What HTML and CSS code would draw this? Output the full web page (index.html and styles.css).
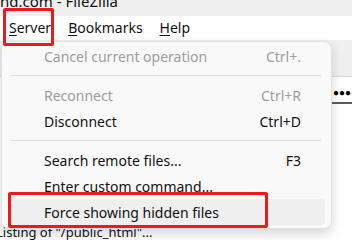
FILE: index.html
```html
<!DOCTYPE html>
<html lang="en">
<head>
    <meta charset="UTF-8">
    <meta name="viewport" content="width=device-width, initial-scale=1.0">
    <title>FileZilla - Server menu</title>
    <link rel="stylesheet" href="styles.css">
</head>
<body>
    <div class="window">
        <div class="titlebar"><span class="title">nd.com - FileZilla</span></div>
        <div class="menubar">
            <span class="menu-item"><u>S</u>erver</span>
            <span class="menu-item"><u>B</u>ookmarks</span>
            <span class="menu-item"><u>H</u>elp</span>
        </div>
        <div class="toolbar"></div>
        <div class="quickbar">
            <div class="field">&#9679;&#9679;&#9679;&#9679;</div>
        </div>
        <div class="content"></div>
        <div class="log">Listing of "/public_html"...</div>

        <div class="popup">
            <div class="item disabled"><span>Cancel current operation</span><span class="key">Ctrl+.</span></div>
            <div class="sep"></div>
            <div class="item disabled"><span>Reconnect</span><span class="key">Ctrl+R</span></div>
            <div class="item"><span>Disconnect</span><span class="key">Ctrl+D</span></div>
            <div class="sep"></div>
            <div class="item"><span>Search remote files...</span><span class="key">F3</span></div>
            <div class="item"><span>Enter custom command...</span></div>
            <div class="item active"><span>Force showing hidden files</span></div>
        </div>

        <div class="mark mark-menu"></div>
        <div class="mark mark-item"></div>
    </div>
</body>
</html>
```

FILE: styles.css
```css
body {
    margin: 0;
    font-family: "Noto Sans", "Open Sans", sans-serif;
    color: #111;
}
.window {
    position: relative;
    width: 352px;
    height: 240px;
    overflow: hidden;
    display: flex;
    flex-direction: column;
    background: #fff;
}
.titlebar {
    height: 16px;
    background: #f0f0f0;
    overflow: hidden;
    font-size: 15px;
    line-height: 15px;
}
.title {
    display: block;
    margin-top: -6px;
}
.menubar {
    height: 24px;
    display: flex;
    gap: 17px;
    padding-left: 9px;
    font-size: 14px;
    line-height: 24px;
    background: #fff;
}
.menubar u {
    text-underline-offset: 2px;
}
.toolbar {
    height: 36px;
    background: #f0f0f0;
    border-bottom: 1px solid #dcdcdc;
}
.quickbar {
    height: 32px;
    display: flex;
    align-items: center;
    background: #fff;
}
.field {
    margin-left: 331px;
    width: 60px;
    height: 20px;
    flex-shrink: 0;
    background: #fff;
    border-bottom: 2px solid #5c5c5c;
    font-size: 10px;
    line-height: 20px;
    padding-left: 2px;
    letter-spacing: 0;
    color: #000;
}
.content {
    flex: 1;
    background: #fff;
}
.log {
    height: 15px;
    font-size: 13px;
    line-height: 15px;
    margin-left: -4px;
    white-space: nowrap;
}

.popup {
    position: absolute;
    left: 1px;
    top: 41px;
    width: 329px;
    padding: 1px 0 3px;
    background: #f9f9f9;
    border: 1px solid #e3e3e3;
    border-radius: 8px;
    box-shadow: 0 5px 12px rgba(0, 0, 0, 0.16);
    font-size: 14px;
}
.item {
    height: 26px;
    display: flex;
    justify-content: space-between;
    align-items: center;
    margin: 0 6px;
    padding: 0 24px 0 36px;
    border-radius: 4px;
}
.item.disabled {
    color: #9d9d9d;
}
.item.active {
    background: #efefef;
}
.sep {
    height: 1px;
    margin: 6px 10px 6px 9px;
    background: #dcdcdc;
}

.mark {
    position: absolute;
    border: 3px solid #f01818;
    border-radius: 2px;
}
.mark-menu {
    left: 3px;
    top: 8px;
    width: 45px;
    height: 32px;
}
.mark-item {
    left: 8px;
    top: 192px;
    width: 254px;
    height: 30px;
}
```
